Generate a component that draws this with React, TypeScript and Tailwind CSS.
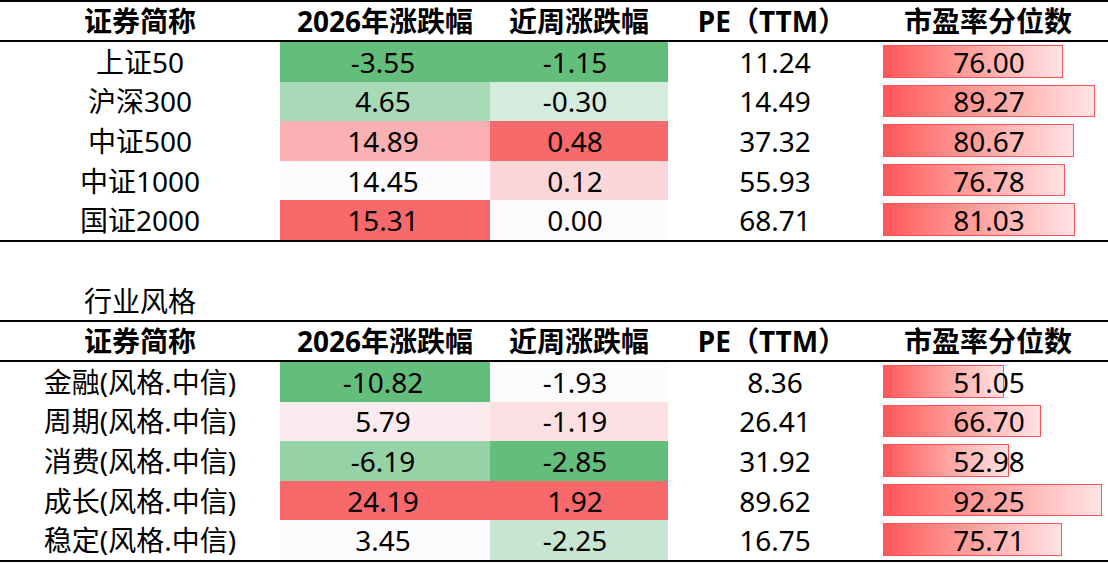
type Row = {
  name: string
  ytd: string
  ytdBg: string
  week: string
  weekBg: string
  pe: string
  pct: number
}

const indexRows: Row[] = [
  { name: '上证50', ytd: '-3.55', ytdBg: 'bg-[#63be7b]', week: '-1.15', weekBg: 'bg-[#63be7b]', pe: '11.24', pct: 76.0 },
  { name: '沪深300', ytd: '4.65', ytdBg: 'bg-[#a9dab7]', week: '-0.30', weekBg: 'bg-[#d4ecdd]', pe: '14.49', pct: 89.27 },
  { name: '中证500', ytd: '14.89', ytdBg: 'bg-[#fab1b3]', week: '0.48', weekBg: 'bg-[#f8696b]', pe: '37.32', pct: 80.67 },
  { name: '中证1000', ytd: '14.45', ytdBg: 'bg-[#fcfcff]', week: '0.12', weekBg: 'bg-[#fbd7da]', pe: '55.93', pct: 76.78 },
  { name: '国证2000', ytd: '15.31', ytdBg: 'bg-[#f8696b]', week: '0.00', weekBg: 'bg-[#fcfcff]', pe: '68.71', pct: 81.03 },
]

const styleRows: Row[] = [
  { name: '金融(风格.中信)', ytd: '-10.82', ytdBg: 'bg-[#63be7b]', week: '-1.93', weekBg: 'bg-[#fcfcff]', pe: '8.36', pct: 51.05 },
  { name: '周期(风格.中信)', ytd: '5.79', ytdBg: 'bg-[#fcebee]', week: '-1.19', weekBg: 'bg-[#fbe0e3]', pe: '26.41', pct: 66.7 },
  { name: '消费(风格.中信)', ytd: '-6.19', ytdBg: 'bg-[#95d2a6]', week: '-2.85', weekBg: 'bg-[#63be7b]', pe: '31.92', pct: 52.98 },
  { name: '成长(风格.中信)', ytd: '24.19', ytdBg: 'bg-[#f8696b]', week: '1.92', weekBg: 'bg-[#f8696b]', pe: '89.62', pct: 92.25 },
  { name: '稳定(风格.中信)', ytd: '3.45', ytdBg: 'bg-[#fcfcff]', week: '-2.25', weekBg: 'bg-[#c7e6d1]', pe: '16.75', pct: 75.71 },
]

const cols = 'grid grid-cols-[280px_210px_178px_214px_226px]'

function Header() {
  // 2px rules above and below, 38px of content
  return (
    <div className={`${cols} h-[42px] items-center font-bold border-y-2 border-black`}>
      <div className="text-center">证券简称</div>
      <div className="text-center">2026年涨跌幅</div>
      <div className="text-center">近周涨跌幅</div>
      <div className="text-center pr-[6px]">PE（TTM）</div>
      <div className="text-center pr-[14px]">市盈率分位数</div>
    </div>
  )
}

function DataRow({ row }: { row: Row }) {
  return (
    <div className={`${cols} h-[39.6px]`}>
      <div className="flex items-center justify-center">{row.name}</div>
      <div className={`flex items-center justify-center pr-[4px] ${row.ytdBg}`}>{row.ytd}</div>
      <div className={`flex items-center justify-center pr-[8px] ${row.weekBg}`}>{row.week}</div>
      <div className="flex items-center justify-center">{row.pe}</div>
      <div className="relative flex items-center justify-center pr-[12px]">
        {/* data bar sits behind the number */}
        <div
          className="absolute left-[1px] top-[3px] bottom-[4px] border border-[#ff555a] bg-linear-to-r from-[#ff555a] to-[#ffe3e4]"
          style={{ width: `${row.pct * 2.37}px` }}
        />
        <span className="relative">{row.pct.toFixed(2)}</span>
      </div>
    </div>
  )
}

function Table({ rows }: { rows: Row[] }) {
  return (
    <div className="border-b-2 border-black">
      <Header />
      {rows.map((r) => (
        <DataRow key={r.name} row={r} />
      ))}
    </div>
  )
}

export default function App() {
  return (
    <div className="w-[1108px] h-[563px] bg-white text-black text-[28px] leading-none font-['Noto_Sans','Noto_Sans_CJK_SC',sans-serif] overflow-hidden">
      <Table rows={indexRows} />
      <div className="h-[78px] w-[280px] flex items-end justify-center pb-[5px]">行业风格</div>
      <Table rows={styleRows} />
    </div>
  )
}
